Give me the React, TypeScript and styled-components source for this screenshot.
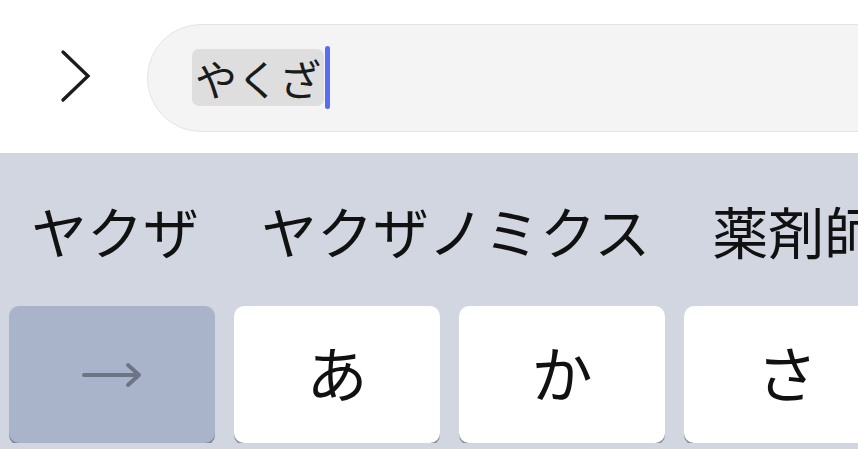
import React from "react";
import styled, { createGlobalStyle } from "styled-components";

const Global = createGlobalStyle`
  html, body {
    margin: 0;
    padding: 0;
    width: 858px;
    height: 449px;
    overflow: hidden;
    background: #ffffff;
    font-family: "Noto Sans CJK JP", "Noto Sans", sans-serif;
  }
`;

const Screen = styled.div`
  width: 858px;
  height: 449px;
  display: flex;
  flex-direction: column;
  overflow: hidden;
`;

const TopBar = styled.div`
  height: 153px;
  flex-shrink: 0;
  background: #ffffff;
  display: flex;
  align-items: center;
  padding-left: 58px;
  gap: 54px;
  overflow: hidden;
`;

const Chevron = styled.svg`
  width: 35px;
  height: 56px;
  flex-shrink: 0;
`;

const Pill = styled.div`
  flex-shrink: 0;
  width: 780px;
  height: 108px;
  box-sizing: border-box;
  border-radius: 54px;
  background: #f4f4f4;
  border: 1.5px solid #e4e4e4;
  display: flex;
  align-items: center;
  padding-left: 44px;
  margin-top: 2px;
`;

const Composing = styled.span`
  display: inline-flex;
  align-items: center;
  height: 57px;
  padding: 0 3px 0 3px;
  border-radius: 7px;
  background: #dedede;
  font-size: 42px;
  line-height: 57px;
  color: #1a1a1a;
`;

const Caret = styled.span`
  display: inline-block;
  width: 5px;
  height: 63px;
  border-radius: 3px;
  background: #5a6cf3;
  margin-left: 1px;
`;

const Keyboard = styled.div`
  flex: 1;
  background: #d1d6e1;
  display: flex;
  flex-direction: column;
`;

const Candidates = styled.div`
  height: 153px;
  display: flex;
  align-items: center;
  padding-left: 31px;
  gap: 62px;
  white-space: nowrap;
  overflow: hidden;
`;

const Candidate = styled.span`
  font-size: 56px;
  line-height: 1;
  color: #111111;
  flex-shrink: 0;
`;

const KeyRow = styled.div`
  display: flex;
  gap: 19px;
  padding-left: 9px;
  overflow: hidden;
`;

const Key = styled.div<{ $dark?: boolean }>`
  flex-shrink: 0;
  width: 206px;
  height: 137px;
  box-sizing: border-box;
  padding-bottom: 6px;
  border-radius: 10px;
  background: ${(p) => (p.$dark ? "#a9b4ca" : "#ffffff")};
  box-shadow: 0 2px 0 ${(p) => (p.$dark ? "#7f8594" : "#8b8f97")};
  display: flex;
  align-items: center;
  justify-content: center;
  font-size: 61px;
  line-height: 1;
  color: #111111;
`;

const Arrow = styled.svg`
  width: 62px;
  height: 26px;
  margin-top: 6px;
`;

export default function App() {
  return (
    <>
      <Global />
      <Screen>
        <TopBar>
          <Chevron viewBox="0 0 35 56">
            <path
              d="M5 3 L30 27 L5 51"
              fill="none"
              stroke="#1c1c1c"
              strokeWidth="3.4"
              strokeLinecap="round"
              strokeLinejoin="miter"
            />
          </Chevron>
          <Pill>
            <Composing>やくざ</Composing>
            <Caret />
          </Pill>
        </TopBar>
        <Keyboard>
          <Candidates>
            <Candidate>ヤクザ</Candidate>
            <Candidate>ヤクザノミクス</Candidate>
            <Candidate>薬剤師</Candidate>
          </Candidates>
          <KeyRow>
            <Key $dark>
              <Arrow viewBox="0 0 62 26">
                <path
                  d="M3 13 H58 M47 3 L58 13 L47 23"
                  fill="none"
                  stroke="#6d7485"
                  strokeWidth="4"
                  strokeLinecap="round"
                  strokeLinejoin="round"
                />
              </Arrow>
            </Key>
            <Key>あ</Key>
            <Key>か</Key>
            <Key>さ</Key>
          </KeyRow>
        </Keyboard>
      </Screen>
    </>
  );
}
